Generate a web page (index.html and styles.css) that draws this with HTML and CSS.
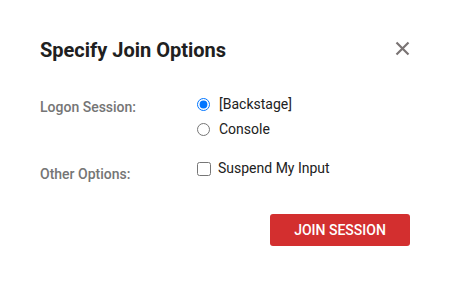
FILE: index.html
```html
<!DOCTYPE html>
<html lang="en">
<head>
    <meta charset="UTF-8">
    <title>Specify Join Options</title>
    <link rel="stylesheet" href="styles.css">
</head>
<body>
    <div class="dialog">
        <div class="dialog-header">
            <h2>Specify Join Options</h2>
            <button type="button" class="close-btn" aria-label="Close">
                <svg width="15" height="15" viewBox="0 0 15 15">
                    <path d="M1.5 1.5 L13.5 13.5 M13.5 1.5 L1.5 13.5" stroke="#7a7474" stroke-width="2.2" fill="none"/>
                </svg>
            </button>
        </div>

        <div class="option-row session-row">
            <div class="option-label">Logon Session:</div>
            <div class="option-controls">
                <label class="choice"><input type="radio" name="session" checked> [Backstage]</label>
                <label class="choice"><input type="radio" name="session"> Console</label>
            </div>
        </div>

        <div class="option-row other-row">
            <div class="option-label">Other Options:</div>
            <div class="option-controls">
                <label class="choice"><input type="checkbox" class="check"> Suspend My Input</label>
            </div>
        </div>

        <div class="dialog-footer">
            <button type="button" class="join-btn">JOIN SESSION</button>
        </div>
    </div>
</body>
</html>
```

FILE: styles.css
```css
body {
    margin: 0;
    font-family: Roboto, sans-serif;
    background-color: #fff;
    color: #212121;
}
.dialog {
    width: 450px;
    height: 286px;
    box-sizing: border-box;
    padding: 32px 40px 0 40px;
}
.dialog-header {
    display: flex;
    justify-content: space-between;
    align-items: flex-start;
    margin-bottom: 28px;
}
.dialog-header h2 {
    margin: 0;
    font-size: 20px;
    font-weight: 700;
    line-height: 36px;
    color: #202020;
}
.close-btn {
    background: none;
    border: none;
    padding: 0;
    margin-top: 9px;
    cursor: pointer;
    line-height: 0;
}
.option-row {
    display: flex;
}
.option-label {
    width: 157px;
    font-size: 14px;
    font-weight: 500;
    color: #757575;
    padding-top: 3px;
}
.other-row .option-label {
    padding-top: 6px;
}
.option-controls {
    display: flex;
    flex-direction: column;
    gap: 8px;
}
.choice {
    display: flex;
    align-items: center;
    font-size: 14px;
    color: #212121;
    line-height: 17px;
}
.choice input {
    margin: 0 9px 0 0;
    width: 13px;
    height: 13px;
}
.choice .check {
    width: 14px;
    height: 14px;
    margin-right: 7px;
}
.other-row {
    margin-top: 22px;
}
.dialog-footer {
    display: flex;
    justify-content: flex-end;
    margin-top: 32px;
}
.join-btn {
    width: 140px;
    height: 32px;
    background-color: #d32f2f;
    color: #fff;
    border: none;
    border-radius: 3px;
    font-family: Roboto, sans-serif;
    font-size: 14px;
    font-weight: 500;
    cursor: pointer;
}
```
